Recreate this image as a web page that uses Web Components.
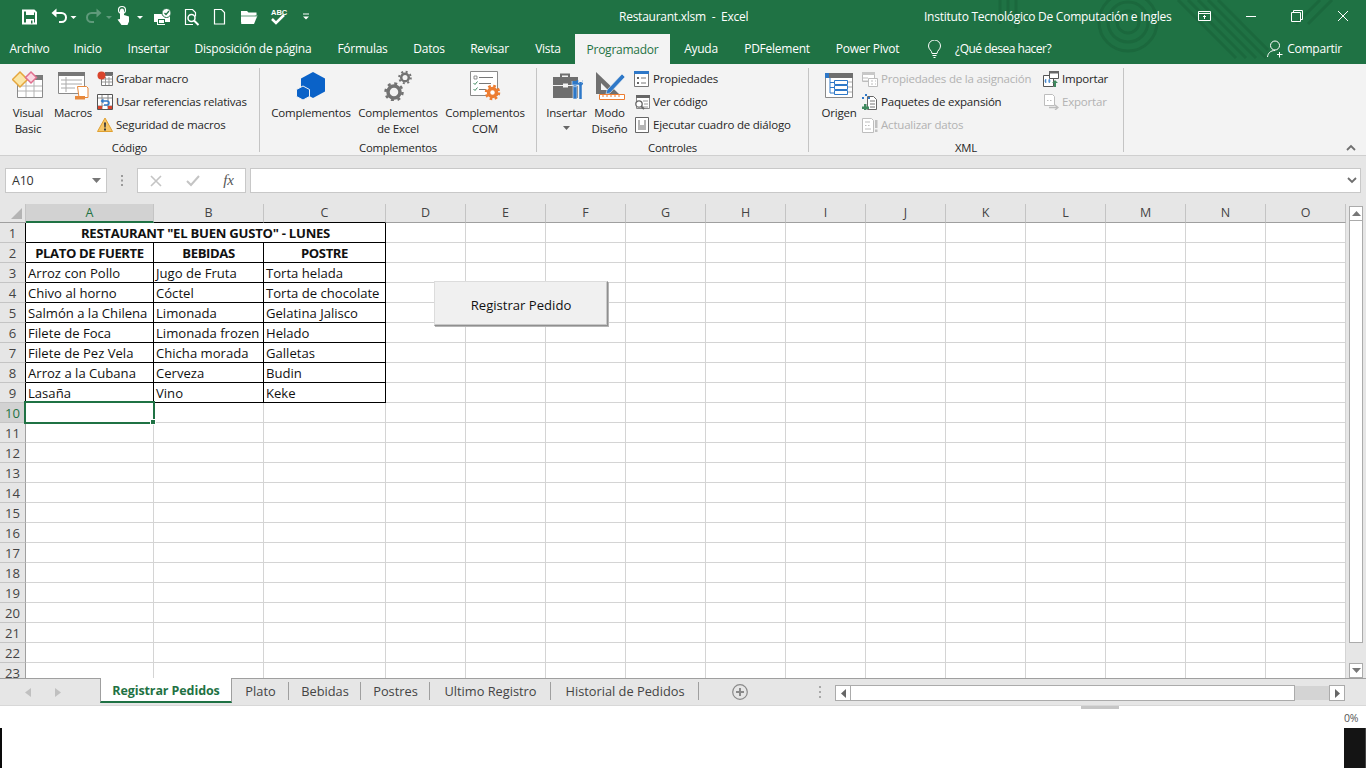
<!DOCTYPE html>
<html lang="es">
<head>
<meta charset="utf-8">
<title>Restaurant.xlsm - Excel</title>
<style>
  html, body { margin: 0; height: 100%; overflow: hidden; }
  body {
    display: flex;
    flex-direction: column;
    width: 1366px;
    height: 768px;
    font: 12px "Open Sans", sans-serif;
    letter-spacing: -0.25px;
    color: #262626;
    background: #fff;
  }
  svg { display: block; }
</style>
</head>
<body>

<xl-header>
  <xl-titlebar>
    <svg slot="qat" width="320" height="32" viewBox="0 0 320 32" fill="none" stroke="#fff">
      <!-- save -->
      <path d="M23 10.500h11l2 2v11h-13z" stroke-width="2"/>
      <path d="M26 10h8v5h-8zM26 19h8v5h-8z" fill="#fff" stroke="none"/>
      <path d="M31 20.500h1.500v3H31z" fill="#217346" stroke="none"/>
      <!-- undo -->
      <path d="M55 13h6.500a4.500 4.500 0 0 1 0 9H59" stroke-width="2"/>
      <path d="M51.500 13l5-4.500v9z" fill="#fff" stroke="none"/>
      <path d="M70.500 16h6l-3 3z" fill="#fff" stroke="none"/>
      <!-- redo, disabled -->
      <path d="M98 13h-6.500a4.500 4.500 0 0 0 0 9H94" stroke="#5f9a7b" stroke-width="2"/>
      <path d="M101.500 13l-5-4.500v9z" fill="#5f9a7b" stroke="none"/>
      <path d="M106 16h6l-3 3z" fill="#5f9a7b" stroke="none"/>
      <!-- touch mode -->
      <path d="M120 17v-6.500a2 2 0 0 1 4 0V15l5 1.500v5l-1.500 3.500h-6l-4-5.500 2.500-.5z" fill="#fff" stroke="none"/>
      <circle cx="122" cy="10" r="3.500" stroke-width="1.200"/>
      <path d="M137 16h6l-3 3z" fill="#fff" stroke="none"/>
      <!-- print with check -->
      <path d="M154 14h8v-3l3-2h3v5h2v8h-5v3h-8v-3h-3z" fill="#fff" stroke="none"/>
      <circle cx="166.500" cy="13" r="4.500" fill="#fff" stroke="#217346"/>
      <path d="M164.500 13l1.500 1.500 3-3.500" stroke="#217346" stroke-width="1.200"/>
      <path d="M158 19h7v5h-7z" fill="#217346" stroke="none"/>
      <path d="M159 20h5v3h-5z" fill="#fff" stroke="none"/>
      <!-- print preview -->
      <path d="M193 24.500h-7.500v-15h7l3 3v4" stroke-width="1.200"/>
      <circle cx="191.500" cy="18" r="3.500" stroke-width="1.500"/>
      <path d="M194 20.500l4.500 4.500" stroke-width="2"/>
      <!-- new document -->
      <path d="M214.500 9.500h7l3 3v11.500h-10z" stroke-width="1.200"/>
      <!-- open -->
      <path d="M241 23v-12h6l1.500 1.500h8v2.500" fill="#fff" stroke="none"/>
      <path d="M241 24l3.500-8.500h13l-3.500 8.500z" fill="#fff" stroke="none"/>
      <path d="M241 16h16" stroke="#217346" stroke-width=".7"/>
      <!-- spelling -->
      <text x="271" y="14.500" font-family="'Liberation Sans',sans-serif" font-size="7.500" font-weight="700" fill="#fff" stroke="none" letter-spacing="0">ABC</text>
      <path d="M272 19l4 4 8-8" stroke-width="2.500"/>
      <!-- customize -->
      <path d="M303 14h6" stroke-width="1"/>
      <path d="M303 16.500h6l-3 3z" fill="#fff" stroke="none"/>
    </svg>
    <span slot="title">Restaurant.xlsm&nbsp; -&nbsp; Excel</span>
    <span slot="account">Instituto Tecnológico De Computación e Ingles</span>
  </xl-titlebar>
  <xl-tabs>
    <xl-tab style="--w:59px">Archivo</xl-tab>
    <xl-tab style="--w:57px">Inicio</xl-tab>
    <xl-tab style="--w:65px">Insertar</xl-tab>
    <xl-tab style="--w:144px">Disposición de página</xl-tab>
    <xl-tab style="--w:75px">Fórmulas</xl-tab>
    <xl-tab style="--w:58px">Datos</xl-tab>
    <xl-tab style="--w:63px">Revisar</xl-tab>
    <xl-tab style="--w:54px">Vista</xl-tab>
    <xl-tab style="--w:95px" active>Programador</xl-tab>
    <xl-tab style="--w:62px">Ayuda</xl-tab>
    <xl-tab style="--w:90px">PDFelement</xl-tab>
    <xl-tab style="--w:91px">Power Pivot</xl-tab>
  </xl-tabs>
</xl-header>

<xl-ribbon>
  <xl-group style="--w:260px;--pad:5px">
    <span slot="label">Código</span>
    <xl-big style="--w:46px">
      <svg slot="icon" width="32" height="32" viewBox="0 0 32 32">
        <path d="M5.500 8.500h25v20h-25z" fill="#fff" stroke="#8a8a8a"/>
        <path d="M20 6h11v5H20z" fill="#7a7a7a"/>
        <path d="M6 17h24M6 22h24M14 12v16M22 12v16" stroke="#b4b4b4"/>
        <path d="M8 3l7.500 7.500L8 18 .5 10.500z" fill="#fbe6a6" stroke="#e5a63c" stroke-width="1.500"/>
        <path d="M19 3l5.500 5.500L19 14l-5.500-5.500z" fill="#fbd6e2" stroke="#e0708f" stroke-width="1.500"/>
      </svg>
      Visual<br>Basic
    </xl-big>
    <xl-big style="--w:44px">
      <svg slot="icon" width="32" height="32" viewBox="0 0 32 32">
        <path d="M1.500 3.500h26v21h-26z" fill="#fff" stroke="#8a8a8a"/>
        <path d="M1 3h27v4H1z" fill="#777"/>
        <path d="M4 11h21M4 15h21M4 19h14M9 8v15" stroke="#aaa"/>
        <path d="M20.500 17.500h9l1.500 1.500v9.500h-9z" fill="#fff" stroke="#e8883a"/>
        <path d="M18 27h10v3.500H18z" fill="#e8883a"/>
      </svg>
      Macros
    </xl-big>
    <xl-small-col style="--gap:2px">
      <xl-small>
        <svg slot="icon" width="16" height="16" viewBox="0 0 16 16">
          <path d="M4.500 4.500h11v10h-11z" fill="#fff" stroke="#777"/>
          <path d="M5 8h10M5 11h10M8.500 6v8M12 6v8" stroke="#999"/>
          <path d="M8 1h8v3H8z" fill="#6b6b6b"/>
          <circle cx="4.500" cy="4.500" r="4" fill="#d9442c"/>
        </svg>
        Grabar macro
      </xl-small>
      <xl-small>
        <svg slot="icon" width="16" height="16" viewBox="0 0 16 16" fill="none">
          <path d="M.5.500h15v15H.5z" fill="#fff" stroke="#555"/>
          <path d="M1 4h14M1 12h14M5 1v14M11 1v14" stroke="#888"/>
          <path d="M5 7h5a2 2 0 0 1 0 4H7" stroke="#2e78c8" stroke-width="1.500"/>
          <path d="M3.500 7l3-2.500v5z" fill="#2e78c8"/>
          <path d="M6 12h4v3H6z" fill="#fff"/>
          <path d="M1 12h4v3H1zM11 12h4v3h-4z" fill="#d9442c"/>
        </svg>
        Usar referencias relativas
      </xl-small>
      <xl-small>
        <svg slot="icon" width="16" height="16" viewBox="0 0 16 16">
          <path d="M8 1l7.500 13.500H.5z" fill="#f6c667" stroke="#e0a030"/>
          <path d="M7 5.500h2l-.3 5H7.300zM7 11.500h2v2H7z" fill="#3a3a3a"/>
        </svg>
        Seguridad de macros
      </xl-small>
    </xl-small-col>
  </xl-group>

  <xl-group style="--w:277px;--pad:7.500px">
    <span slot="label">Complementos</span>
    <xl-big style="--w:87px">
      <svg slot="icon" width="32" height="32" viewBox="0 0 32 32">
        <path d="M16 3l12 6.500v13L16 29 4 22.500v-13z" transform="translate(2 0)" fill="#0a62c8"/>
        <path d="M8 17l6.500 3.500v7L8 31l-6.500-3.500v-7z" fill="#0a62c8" stroke="#f3f3f3"/>
      </svg>
      Complementos
    </xl-big>
    <xl-big style="--w:87px">
      <svg slot="icon" width="32" height="32" viewBox="0 0 32 32" fill="none" stroke="#737373">
        <circle cx="12" cy="23" r="6" stroke-width="3.500"/>
        <circle cx="12" cy="23" r="8.500" stroke-width="2.500" stroke-dasharray="3 3.670"/>
        <circle cx="23" cy="8.500" r="3.800" stroke-width="2.500"/>
        <circle cx="23" cy="8.500" r="5.800" stroke-width="2" stroke-dasharray="2 2.550"/>
      </svg>
      Complementos<br>de Excel
    </xl-big>
    <xl-big style="--w:87px">
      <svg slot="icon" width="32" height="32" viewBox="0 0 32 32" fill="none">
        <path d="M1.500 2.500h27v24h-27z" fill="#fff" stroke="#8a8a8a"/>
        <path d="M5 7h3v3H5z" stroke="#777" stroke-width=".8"/>
        <path d="M10 8.500h14M10 14.500h12M10 20.500h7" stroke="#777"/>
        <path d="M4.500 14l1.500 1.500 2.500-3M4.500 20l1.500 1.500 2.500-3" stroke="#3f8a5f"/>
        <circle cx="23.500" cy="23.500" r="4" stroke="#ed7d31" stroke-width="3.500"/>
        <circle cx="23.500" cy="23.500" r="6.500" stroke="#ed7d31" stroke-width="2.500" stroke-dasharray="2.600 2.500"/>
      </svg>
      Complementos<br>COM
    </xl-big>
  </xl-group>

  <xl-group style="--w:272px;--pad:8px">
    <span slot="label">Controles</span>
    <xl-big style="--w:43px">
      <svg slot="icon" width="32" height="32" viewBox="0 0 32 32" fill="none">
        <path d="M10 8V5.500h8V8" stroke="#6e6e6e" stroke-width="2"/>
        <path d="M2 8h25v8H2z" fill="#6e6e6e"/>
        <path d="M2 17h25v12H2z" fill="#6e6e6e"/>
        <path d="M12 14.500h5v4h-5z" fill="#f3f3f3"/>
        <path d="M22 16v14h4V16zM21 12v4l3 2 3-2v-4" fill="#2e78c8" stroke="#f3f3f3" stroke-width=".6"/>
        <path d="M29.500 13v17" stroke="#2e78c8" stroke-width="2.500"/>
        <path d="M26.500 11v3l3 2 3-2v-3" stroke="#2e78c8" stroke-width="1.500"/>
      </svg>
      Insertar
      <svg slot="caret" width="7" height="4" viewBox="0 0 7 4"><path d="M0 0h7L3.500 4z" fill="#666"/></svg>
    </xl-big>
    <xl-big style="--w:43px">
      <svg slot="icon" width="32" height="32" viewBox="0 0 32 32" fill="none">
        <path d="M2 3l23 22H2z" fill="#707070"/>
        <path d="M7 14l7 7H7z" fill="#f3f3f3"/>
        <path d="M13 21l-1 4 4-1 15-16-3-3z" fill="#2e78c8" stroke="#f3f3f3" stroke-width=".6"/>
        <path d="M5.500 25.500h25v5h-25z" fill="#fff" stroke="#ed7d31"/>
        <path d="M9 26v2M13 26v2M17 26v2M21 26v2M25 26v2" stroke="#ed7d31"/>
      </svg>
      Modo<br>Diseño
    </xl-big>
    <xl-small-col style="--gap:3px">
      <xl-small>
        <svg slot="icon" width="16" height="16" viewBox="0 0 16 16" fill="none">
          <path d="M.5.500h14v15H.5z" fill="#fff" stroke="#777"/>
          <path d="M0 0h15v3H0z" fill="#2e78c8"/>
          <path d="M3 6h2v2H3zM3 11h2v2H3z" fill="#666"/>
          <path d="M7 7h5M7 12h5" stroke="#777"/>
        </svg>
        Propiedades
      </xl-small>
      <xl-small>
        <svg slot="icon" width="16" height="16" viewBox="0 0 16 16" fill="none">
          <path d="M2.500 1.500h13v13h-13z" fill="#fff" stroke="#888"/>
          <path d="M2 1h14v3H2z" fill="#666"/>
          <path d="M9 7h5M10 10h4M9 13h5" stroke="#999"/>
          <circle cx="5" cy="10" r="3.200" fill="#fff" stroke="#666" stroke-width="1.300"/>
          <path d="M7.300 12.300L10 15" stroke="#666" stroke-width="1.800"/>
        </svg>
        Ver código
      </xl-small>
      <xl-small>
        <svg slot="icon" width="16" height="16" viewBox="0 0 16 16">
          <path d="M1.500.5h13v15h-13z" fill="#fff" stroke="#666"/>
          <path d="M4 3h8v10H4z" fill="#b5b5b5"/>
          <path d="M6 3h4v5H6z" fill="#fff"/>
        </svg>
        Ejecutar cuadro de diálogo
      </xl-small>
    </xl-small-col>
  </xl-group>

  <xl-group style="--w:315px;--pad:7px">
    <span slot="label">XML</span>
    <xl-big style="--w:46px">
      <svg slot="icon" width="32" height="32" viewBox="0 0 32 32" fill="none">
        <path d="M2.500 4.500h27v24h-27z" fill="#fff" stroke="#8a8a8a"/>
        <path d="M2 4h28v5H2z" fill="#6e6e6e"/>
        <path d="M2 4h4v5H2z" fill="#2e78c8"/>
        <path d="M7 9v15M7 13.500h4M7 18.500h4M7 24h4" stroke="#2e78c8"/>
        <path d="M11.500 11.500h13v4h-13zM11.500 16.500h13v4h-13zM11.500 21.500h13v4h-13z" fill="#fff" stroke="#2e78c8"/>
        <path d="M25 13h4M25 18h4M25 23h4" stroke="#aaa"/>
      </svg>
      Origen
    </xl-big>
    <xl-small-col style="--gap:0;--w:181px">
      <xl-small disabled>
        <svg slot="icon" width="16" height="16" viewBox="0 0 16 16" fill="none" stroke="#bdbdbd">
          <path d="M.5 1.500h12v9H.5z" fill="#fff"/>
          <path d="M0 1h13v3H0z" fill="#c8c8c8" stroke="none"/>
          <path d="M6.500 7.500h9v8h-9z" fill="#fff"/>
          <path d="M9 10h2M9 13h2M13 10h1M13 13h1M1 7h5M1 10h5"/>
        </svg>
        Propiedades de la asignación
      </xl-small>
      <xl-small>
        <svg slot="icon" width="16" height="16" viewBox="0 0 16 16" fill="none">
          <path d="M5.500 2.500h6l3 3v10h-9z" fill="#fff" stroke="#666"/>
          <path d="M8 7h5M8 10h5M8 13h5" stroke="#777"/>
          <path d="M0 3h2v2H0zM3 0h2v2H3zM6 3h2v2H6z" fill="#2e78c8"/>
          <path d="M2 10h2.500v2.500H7V15H4.500v1H2v-1H0v-2.500h2z" fill="#3f8a5f"/>
        </svg>
        Paquetes de expansión
      </xl-small>
      <xl-small disabled>
        <svg slot="icon" width="16" height="16" viewBox="0 0 16 16" fill="none" stroke="#bdbdbd">
          <path d="M.5 1.500h9l2 2v12H.5z" fill="#fff"/>
          <path d="M3 8.500h1.500M6 8.500h1.500M3 12h6M3 5h5"/>
          <path d="M13 3h2.500v8H13zM13 12.500h2.500V15H13z" fill="#c0c0c0" stroke="none"/>
        </svg>
        Actualizar datos
      </xl-small>
    </xl-small-col>
    <xl-small-col style="--gap:0">
      <xl-small>
        <svg slot="icon" width="16" height="16" viewBox="0 0 16 16" fill="none">
          <path d="M.5 4.500h10v11H.5z" fill="#fff" stroke="#555"/>
          <path d="M6.500.5h9v7h-9z" fill="#fff" stroke="#555"/>
          <path d="M6 0h10v2.500H6z" fill="#666"/>
          <path d="M2 10h1.500M5 10h1.500M3 8l-1 2 1 2M6 8l1 2-1 2" stroke="#2e78c8"/>
          <path d="M12 9l3 3h-2v4h-2v-4H9z" fill="#3f8a5f"/>
        </svg>
        Importar
      </xl-small>
      <xl-small disabled>
        <svg slot="icon" width="16" height="16" viewBox="0 0 16 16" fill="none" stroke="#bdbdbd">
          <path d="M1.500.5h8l2 2v9h-10z" fill="#fff"/>
          <path d="M4 6.500h1.500M7 6.500h1.500"/>
          <path d="M6 13.500h8M12 11l3 2.500-3 2.500" stroke-width="1.300"/>
        </svg>
        Exportar
      </xl-small>
    </xl-small-col>
  </xl-group>
</xl-ribbon>

<xl-formula-bar></xl-formula-bar>

<xl-sheet-area>
  <xl-sheet>
    <xl-macro-button slot="over">Registrar Pedido</xl-macro-button>
  </xl-sheet>
</xl-sheet-area>

<xl-sheet-tabs>
  <xl-sheet-tab active style="--w:132px">Registrar Pedidos</xl-sheet-tab>
  <xl-sheet-tab style="--w:57px">Plato</xl-sheet-tab>
  <xl-sheet-tab style="--w:72px">Bebidas</xl-sheet-tab>
  <xl-sheet-tab style="--w:69px">Postres</xl-sheet-tab>
  <xl-sheet-tab style="--w:121px">Ultimo Registro</xl-sheet-tab>
  <xl-sheet-tab style="--w:148px">Historial de Pedidos</xl-sheet-tab>
</xl-sheet-tabs>

<xl-status>0%</xl-status>

<script>
  // every element is the same shape: a styled shadow root, filled once
  function define(name, html, onReady) {
    customElements.define(
      name,
      class extends HTMLElement {
        constructor() {
          super();
          this.attachShadow({ mode: "open" });
          this.shadowRoot.innerHTML = html;
          if (onReady) onReady(this.shadowRoot);
        }
      }
    );
  }

  define("xl-header", `
    <style>
      :host { display: block; height: 64px; background: #1f7244; position: relative; color: #fff; overflow: hidden; }
      svg { position: absolute; left: 880px; top: 0; }
      .rows { position: relative; }
    </style>
    <svg width="486" height="64" viewBox="0 0 486 64" fill="none" stroke="#1b683d" stroke-width="3">
      <circle cx="248" cy="22" r="11"/>
      <circle cx="248" cy="22" r="20"/>
      <circle cx="248" cy="22" r="29"/>
      <path d="M298 0l58 58M308 0l58 58M318 0l58 58M328 0l58 58M338 0l50 50"/>
      <path d="M120 0v24M128 0v18M136 0v28M440 0l-24 24M452 0l-24 24"/>
    </svg>
    <div class="rows"><slot></slot></div>
  `);

  define("xl-titlebar", `
    <style>
      :host { display: grid; grid-template-columns: 619px 305px 258px 184px; height: 32px; align-items: center; }
      .win { display: flex; }
      .win div { width: 46px; height: 32px; display: flex; align-items: center; justify-content: center; }
    </style>
    <div><slot name="qat"></slot></div>
    <div><slot name="title"></slot></div>
    <div><slot name="account"></slot></div>
    <div class="win">
      <div><svg width="14" height="14" viewBox="0 0 14 14" fill="none" stroke="#fff"><path d="M.5 2.500h12v9H.5zM1 4.500h11M6.500 10V6.500M5 8l1.500-1.500L8 8"/></svg></div>
      <div><svg width="12" height="12" viewBox="0 0 12 12" fill="none" stroke="#fff"><path d="M1 6.500h10"/></svg></div>
      <div><svg width="12" height="12" viewBox="0 0 12 12" fill="none" stroke="#fff"><path d="M.5 2.500h9v9h-9zM2.500 2.500v-2h9v9h-2"/></svg></div>
      <div><svg width="12" height="12" viewBox="0 0 12 12" fill="none" stroke="#fff"><path d="M1 1l10 10M11 1L1 11"/></svg></div>
    </div>
  `);

  define("xl-tabs", `
    <style>
      :host { display: flex; height: 32px; align-items: stretch; }
      .tell { display: flex; align-items: center; gap: 13px; margin-left: 15px; padding-top: 1px; letter-spacing: -0.5px; }
      .tell span { margin-left: 1px; }
      .share { display: flex; align-items: center; gap: 3px; margin-left: auto; margin-right: 24px; padding-top: 1px; }
    </style>
    <slot></slot>
    <div class="tell">
      <svg width="13" height="18" viewBox="0 0 13 18" fill="none" stroke="#fff"><path d="M4 13.500c0-3-3.500-4-3.500-7.500a6 6 0 0 1 12 0c0 3.500-3.500 4.500-3.500 7.500zM4.500 15.500h4M5.500 17.500h2"/></svg>
      <span>¿Qué desea hacer?</span>
    </div>
    <div class="share">
      <svg width="17" height="18" viewBox="0 0 17 18" fill="none" stroke="#fff"><circle cx="8" cy="5.500" r="4.500"/><path d="M.5 17c.5-4 3-6.500 7.500-6.500M12.500 12v5.500M10 14.500h5.500"/></svg>
      <span>Compartir</span>
    </div>
  `);

  define("xl-tab", `
    <style>
      :host { display: flex; width: var(--w); align-items: center; justify-content: center; padding-top: 1px; box-sizing: border-box; }
      :host([active]) { background: #f3f3f3; color: #1f7244; margin-top: 2px; padding-top: 0; }
    </style>
    <slot></slot>
  `);

  define("xl-ribbon", `
    <style>
      :host { display: flex; height: 92px; box-sizing: border-box; background: #f3f3f3; border-bottom: 1px solid #cfcfcf; position: relative; font-size: 11.500px; letter-spacing: -0.2px; }
      svg { position: absolute; right: 10px; top: 80px; }
    </style>
    <slot></slot>
    <svg width="10" height="7" viewBox="0 0 10 7" fill="none" stroke="#707070" stroke-width="1.800"><path d="M1 6l4-4 4 4"/></svg>
  `);

  define("xl-group", `
    <style>
      :host { display: block; width: var(--w); height: 84px; margin-top: 4px; box-sizing: border-box; border-right: 1px solid #c4c4c4; position: relative; }
      .body { display: flex; padding-left: var(--pad); }
      .label { position: absolute; top: 72px; left: 0; right: 0; text-align: center; line-height: 16px; font-size: 11.300px; }
    </style>
    <div class="body"><slot></slot></div>
    <div class="label"><slot name="label"></slot></div>
  `);

  define("xl-big", `
    <style>
      :host { display: flex; flex: none; flex-direction: column; align-items: center; width: var(--w); text-align: center; line-height: 16px; }
      .icon { height: 32px; margin: 1px 0 4px; }
      ::slotted([slot="caret"]) { margin-top: 5px; }
    </style>
    <div class="icon"><slot name="icon"></slot></div>
    <div><slot></slot></div>
    <slot name="caret"></slot>
  `);

  define("xl-small-col", `
    <style>
      :host { display: flex; flex: none; flex-direction: column; margin-left: var(--gap); width: var(--w, auto); margin-top: -1px; }
    </style>
    <slot></slot>
  `);

  define("xl-small", `
    <style>
      :host { display: flex; align-items: center; gap: 3px; height: 23px; white-space: nowrap; }
      :host([disabled]) { color: #b2b2b2; }
      span { margin-top: -1px; }
    </style>
    <slot name="icon"></slot>
    <span><slot></slot></span>
  `);

  define("xl-formula-bar", `
    <style>
      :host { display: flex; height: 48px; box-sizing: border-box; padding: 12px 5px 0; background: #e6e6e6; }
      .box { height: 25px; box-sizing: border-box; background: #fff; border: 1px solid #c8c8c8; display: flex; align-items: center; }
      .name { width: 102px; padding: 0 5px 0 6px; justify-content: space-between; font-size: 12.500px; color: #333; }
      .dots { width: 30px; height: 25px; display: flex; justify-content: center; align-items: center; }
      .btns { width: 109px; justify-content: space-between; padding: 0 11px 0 12px; }
      .fx { font: italic 15px "Liberation Serif", serif; color: #555; letter-spacing: 0; }
      .input { flex: 1; margin-left: 4px; justify-content: flex-end; padding-right: 3px; }
    </style>
    <div class="box name">
      <span>A10</span>
      <svg width="9" height="5" viewBox="0 0 9 5"><path d="M0 0h9L4.500 5z" fill="#777"/></svg>
    </div>
    <div class="dots"><svg width="3" height="11" viewBox="0 0 3 11" fill="#9a9a9a"><path d="M0 0h2v2H0zM0 4.500h2v2H0zM0 9h2v2H0z"/></svg></div>
    <div class="box btns">
      <svg width="12" height="12" viewBox="0 0 12 12" fill="none" stroke="#c4c4c4" stroke-width="1.600"><path d="M1 1l10 10M11 1L1 11"/></svg>
      <svg width="14" height="12" viewBox="0 0 14 12" fill="none" stroke="#c4c4c4" stroke-width="2"><path d="M1 6l4 4 8-9"/></svg>
      <span class="fx">fx</span>
    </div>
    <div class="box input">
      <svg width="10" height="7" viewBox="0 0 10 7" fill="none" stroke="#6e6e6e" stroke-width="1.800"><path d="M1 1l4 4 4-4"/></svg>
    </div>
  `);

  define("xl-sheet-area", `
    <style>
      :host { display: flex; height: 474px; background: #e6e6e6; }
      .scroll { width: 20px; box-sizing: border-box; padding: 2px 3px 0 3px; display: flex; flex-direction: column; }
      .btn { height: 15px; background: #fff; border: 1px solid #ababab; box-sizing: border-box; display: flex; align-items: center; justify-content: center; flex: none; }
      .thumb { height: 422px; background: #fff; border: 1px solid #ababab; border-top: 0; box-sizing: border-box; flex: none; }
      .track { flex: 1; }
    </style>
    <slot></slot>
    <div class="scroll">
      <div class="btn"><svg width="9" height="5" viewBox="0 0 9 5"><path d="M0 5h9L4.500 0z" fill="#777"/></svg></div>
      <div class="thumb"></div>
      <div class="track"></div>
      <div class="btn"><svg width="9" height="5" viewBox="0 0 9 5"><path d="M0 0h9L4.500 5z" fill="#777"/></svg></div>
    </div>
  `);

  // grid is built from data so rows and gridlines stay in one place
  const COLUMNS = "ABCDEFGHIJKLMNO".split("");
  const MENU = [
    ["PLATO DE FUERTE", "BEBIDAS", "POSTRE"],
    ["Arroz con Pollo", "Jugo de Fruta", "Torta helada"],
    ["Chivo al horno", "Cóctel", "Torta de chocolate"],
    ["Salmón a la Chilena", "Limonada", "Gelatina Jalisco"],
    ["Filete de Foca", "Limonada frozen", "Helado"],
    ["Filete de Pez Vela", "Chicha morada", "Galletas"],
    ["Arroz a la Cubana", "Cerveza", "Budin"],
    ["Lasaña", "Vino", "Keke"],
  ];

  define("xl-sheet", `
    <style>
      :host { display: block; width: 1346px; height: 474px; position: relative; }
      .grid { display: grid; grid-template-columns: 26px 128px 110px 122px repeat(12, 80px); grid-template-rows: 19px repeat(22, 20px) 15px; background: #fff; }
      .grid > div { box-sizing: border-box; border-right: 1px solid #d4d4d4; border-bottom: 1px solid #d4d4d4; padding: 1px 2px 0; white-space: nowrap; overflow: hidden; font: 13.100px/18px "Open Sans", sans-serif; letter-spacing: 0; color: #111; }
      .grid > .head { background: #e6e6e6; color: #444; text-align: center; border-right-color: #c4c4c4; border-bottom-color: #9f9f9f; padding: 0; font-size: 12.500px; }
      .grid > .rowno { background: #e6e6e6; color: #444; text-align: center; border-right-color: #9f9f9f; border-bottom-color: #c4c4c4; padding: 1px 0 0; }
      .grid > .inked { border-right-color: #000; border-bottom-color: #000; }
      .grid > .bold { font-weight: 700; text-align: center; letter-spacing: -0.25px; }
      .grid > .tight { letter-spacing: -0.4px; }
      .grid > .selected { background: #d2d2d2; color: #1f7244; }
      .grid > .head.selected { border-bottom: 2px solid #1f7244; }
      .grid > .last { border-bottom: 0; overflow: visible; }
      .corner { position: absolute; left: 11px; top: 4px; width: 0; height: 0; border-left: 11px solid transparent; border-bottom: 11px solid #b4b4b4; }
      .cursor { position: absolute; left: 24px; top: 197px; width: 131px; height: 23px; box-sizing: border-box; border: 2px solid #1f7244; }
      .cursor::after { content: ""; position: absolute; right: -3px; bottom: -3px; width: 4px; height: 4px; background: #1f7244; border: 1px solid #fff; }
    </style>
    <div class="grid"></div>
    <div class="corner"></div>
    <div class="cursor"></div>
    <slot name="over"></slot>
  `, (root) => {
    const grid = root.querySelector(".grid");
    const cell = (cls, text, span) => {
      const el = document.createElement("div");
      el.className = cls;
      el.textContent = text || "";
      if (span) el.style.gridColumn = "span " + span;
      grid.appendChild(el);
      return el;
    };
    cell("head", "");
    COLUMNS.forEach((c, i) => {
      const el = cell("head" + (i === 0 ? " selected" : ""), c);
      if (i < 3 && i > 0) el.style.borderBottomColor = "#000";
    });
    for (let row = 1; row <= 23; row++) {
      const tail = row === 23 ? " last" : "";
      const no = cell("rowno" + (row === 10 ? " selected" : "") + tail, String(row));
      if (row <= 9) no.style.borderRightColor = "#000";
      if (row === 1) {
        cell("inked bold", 'RESTAURANT "EL BUEN GUSTO" - LUNES', 3);
      } else if (row <= 9) {
        MENU[row - 2].forEach((t) => cell("inked" + (row === 2 ? " bold tight" : ""), t));
      } else {
        for (let i = 0; i < 3; i++) cell(tail, "");
      }
      for (let i = 3; i < COLUMNS.length; i++) cell(tail, "");
    }
  });

  define("xl-macro-button", `
    <style>
      :host { position: absolute; left: 434px; top: 77px; width: 174px; height: 45px; box-sizing: border-box; padding-top: 2px; display: flex; align-items: center; justify-content: center; background: #f0f0f0; border: 1px solid; border-color: #dcdcdc #8f8f8f #8f8f8f #dcdcdc; box-shadow: 1px 1px 0 #b5b5b5, inset -1px -1px 0 #c8c8c8; font: 13.100px "Open Sans", sans-serif; letter-spacing: 0; color: #111; }
    </style>
    <slot></slot>
  `);

  define("xl-sheet-tabs", `
    <style>
      :host { display: flex; height: 28px; box-sizing: border-box; background: #e6e6e6; border-top: 1px solid #9f9f9f; border-bottom: 1px solid #d8d8d8; font-size: 12.800px; letter-spacing: 0; }
      .nav { width: 100px; display: flex; align-items: center; justify-content: center; gap: 24px; padding-right: 14px; box-sizing: border-box; }
      .tabs { display: flex; height: 25px; margin-top: -1px; }
      .add { margin-left: 33px; align-self: center; }
      .dots { margin-left: 71px; align-self: center; }
      .hs { display: flex; height: 16px; width: 510px; margin: 6px 0 0 13px; align-self: flex-start; }
      .hs .arrow { width: 16px; box-sizing: border-box; background: #fff; border: 1px solid #ababab; display: flex; align-items: center; justify-content: center; }
      .hs .thumb { width: 444px; background: #fff; border: 1px solid #ababab; border-width: 1px 1px 1px 0; box-sizing: border-box; }
      .hs .track { flex: 1; background: #d4d4d4; margin: 1px 0; }
    </style>
    <div class="nav">
      <svg width="6" height="9" viewBox="0 0 6 9"><path d="M6 0v9L0 4.500z" fill="#c0c0c0"/></svg>
      <svg width="6" height="9" viewBox="0 0 6 9"><path d="M0 0v9l6-4.500z" fill="#c0c0c0"/></svg>
    </div>
    <div class="tabs"><slot></slot></div>
    <svg class="add" width="16" height="16" viewBox="0 0 16 16" fill="none" stroke="#8a8a8a"><circle cx="8" cy="8" r="7.300" stroke-width="1.200"/><path d="M8 4v8M4 8h8" stroke-width="2"/></svg>
    <svg class="dots" width="3" height="12" viewBox="0 0 3 12" fill="#a8a8a8"><path d="M0 0h2v2H0zM0 5h2v2H0zM0 10h2v2H0z"/></svg>
    <div class="hs">
      <div class="arrow"><svg width="5" height="9" viewBox="0 0 5 9"><path d="M5 0v9L0 4.500z" fill="#666"/></svg></div>
      <div class="thumb"></div>
      <div class="track"></div>
      <div class="arrow"><svg width="5" height="9" viewBox="0 0 5 9"><path d="M0 0v9l5-4.500z" fill="#666"/></svg></div>
    </div>
  `);

  define("xl-sheet-tab", `
    <style>
      :host { display: flex; width: var(--w); box-sizing: border-box; align-items: center; justify-content: center; padding-top: 1px; color: #444; position: relative; }
      :host(:not([active]))::after { content: ""; position: absolute; right: 0; top: 4px; bottom: 3px; width: 1px; background: #9f9f9f; }
      :host([active]) { background: #fff; color: #1f7244; font-weight: 700; font-size: 12.500px; letter-spacing: -0.1px; border-bottom: 2px solid #1f7244; border-left: 1px solid #9f9f9f; border-right: 1px solid #9f9f9f; }
    </style>
    <slot></slot>
  `);

  define("xl-status", `
    <style>
      :host { display: grid; grid-template-columns: 2px 1079px 38px 1fr 22px; height: 62px; background: #fff; }
      .l { grid-column: 1; align-self: end; height: 40px; background: #0a0a0a; }
      .bump { grid-column: 3; height: 3px; background: #c6c6c6; }
      .r { grid-column: 5; display: flex; flex-direction: column; justify-content: flex-end; font-size: 10.500px; color: #555; }
      .r i { display: block; height: 40px; margin-top: 3px; background: #141414; border-right: 1px solid #444; box-sizing: border-box; }
    </style>
    <div class="l"></div>
    <div class="bump"></div>
    <div class="r"><span><slot></slot></span><i></i></div>
  `);
</script>
</body>
</html>
